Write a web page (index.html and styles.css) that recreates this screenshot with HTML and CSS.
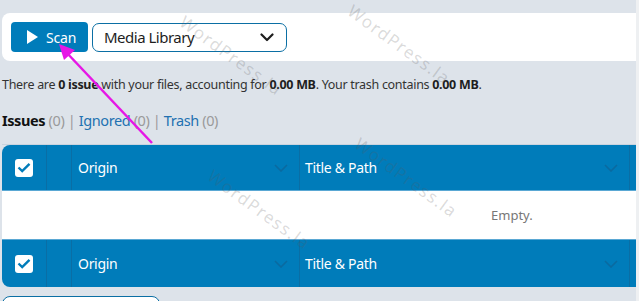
FILE: index.html
```html
<!DOCTYPE html>
<html lang="en">
<head>
  <meta charset="UTF-8" />
  <title>Media Cleaner</title>
  <link rel="stylesheet" href="styles.css">
</head>
<body>
  <div class="page">

    <div class="toolbar">
      <button class="scan-btn">
        <svg width="11" height="14" viewBox="0 0 11 14"><path d="M0 0 L11 7 L0 14 Z" fill="#fff"/></svg>
        <span>Scan</span>
      </button>
      <div class="source-select">
        <span>Media Library</span>
        <svg width="14" height="9" viewBox="0 0 14 9"><path d="M1.5 1.5 L7 7 L12.5 1.5" fill="none" stroke="#1e1e1e" stroke-width="2.2" stroke-linecap="round" stroke-linejoin="round"/></svg>
      </div>
    </div>

    <p class="summary">There are <b>0 issue</b> with your files, accounting for <b>0.00 MB</b>. Your trash contains <b>0.00 MB</b>.</p>

    <div class="tabs">
      <span class="tab-active">Issues</span> <span class="count">(0)</span>
      <span class="sep">|</span>
      <a href="#">Ignored</a> <span class="count">(0)</span>
      <span class="sep">|</span>
      <a href="#">Trash</a> <span class="count">(0)</span>
    </div>

    <div class="table">
      <div class="row head first">
        <div class="cell c-check"><span class="checkbox"><svg width="14" height="11" viewBox="0 0 14 11"><path d="M1.5 5.5 L5.2 9 L12.5 1.8" fill="none" stroke="#007cba" stroke-width="2.4"/></svg></span></div>
        <div class="cell c-thumb"></div>
        <div class="cell c-origin">Origin<svg class="chev" width="14" height="8" viewBox="0 0 14 8"><path d="M1 1 L7 7 L13 1" fill="none" stroke="#0a6aa0" stroke-width="1.6"/></svg></div>
        <div class="cell c-title">Title &amp; Path<svg class="chev" width="14" height="8" viewBox="0 0 14 8"><path d="M1 1 L7 7 L13 1" fill="none" stroke="#0a6aa0" stroke-width="1.6"/></svg></div>
        <div class="cell c-rest"></div>
      </div>
      <div class="row empty">Empty.</div>
      <div class="row head last">
        <div class="cell c-check"><span class="checkbox"><svg width="14" height="11" viewBox="0 0 14 11"><path d="M1.5 5.5 L5.2 9 L12.5 1.8" fill="none" stroke="#007cba" stroke-width="2.4"/></svg></span></div>
        <div class="cell c-thumb"></div>
        <div class="cell c-origin">Origin<svg class="chev" width="14" height="8" viewBox="0 0 14 8"><path d="M1 1 L7 7 L13 1" fill="none" stroke="#0a6aa0" stroke-width="1.6"/></svg></div>
        <div class="cell c-title">Title &amp; Path<svg class="chev" width="14" height="8" viewBox="0 0 14 8"><path d="M1 1 L7 7 L13 1" fill="none" stroke="#0a6aa0" stroke-width="1.6"/></svg></div>
        <div class="cell c-rest"></div>
      </div>
    </div>

    <div class="pager"></div>

    <span class="watermark wm1">WordPress.la</span>
    <span class="watermark wm2">WordPress.la</span>
    <span class="watermark wm3">WordPress.la</span>
    <span class="watermark wm4">WordPress.la</span>

    <svg class="arrow" width="160" height="150" viewBox="0 0 160 150">
      <line x1="152" y1="143" x2="66" y2="52" stroke="#e617e6" stroke-width="2.5"/>
      <polygon points="59,44 75,50 64,60" fill="#e617e6"/>
    </svg>
  </div>
</body>
</html>
```

FILE: styles.css
```css
html, body {
  margin: 0;
  overflow: hidden;
}

body {
  background: #eef0f2;
  font-family: 'Noto Sans', 'Open Sans', sans-serif;
  color: #333;
}

.page {
  position: relative;
  width: 634px;
  min-height: 330px;
  padding: 13px 0 0 2px;
  background: #dde3ea;
}

.toolbar {
  display: flex;
  align-items: center;
  gap: 4px;
  height: 48px;
  padding-left: 9px;
  background: #fff;
  border-radius: 8px 0 0 8px;
}

.scan-btn {
  display: flex;
  align-items: center;
  gap: 8px;
  width: 77px;
  height: 30px;
  padding: 0 0 0 16px;
  border: none;
  border-radius: 4px;
  background: #007cba;
  color: #fff;
  font-family: inherit;
  font-size: 14px;
  letter-spacing: -0.2px;
}

.source-select {
  display: flex;
  align-items: center;
  justify-content: space-between;
  box-sizing: border-box;
  width: 195px;
  height: 29px;
  padding: 0 12px 0 11px;
  border: 1.5px solid #0b6fa4;
  border-radius: 7px;
  font-size: 15px;
  letter-spacing: -0.5px;
  color: #1e1e1e;
}

.summary {
  margin: 15px 0 0 0;
  font-size: 12.5px;
  line-height: 18px;
  letter-spacing: -0.3px;
  color: #333;
}

.summary b {
  color: #1e1e1e;
}

.tabs {
  margin-top: 16px;
  font-size: 14.5px;
  line-height: 20px;
  letter-spacing: -0.4px;
  color: #999;
}

.tabs a {
  color: #2271b1;
  text-decoration: none;
}

.tab-active {
  font-weight: bold;
  color: #111;
}

.count, .sep {
  color: #9a9a9a;
}

.table {
  margin-top: 14px;
  border-top: 1px solid #c9d3de;
}

.row {
  display: flex;
}

.head {
  height: 45px;
  background: #007cba;
  color: #fff;
  font-size: 14px;
  letter-spacing: -0.3px;
}

.head.first {
  border-radius: 8px 0 0 0;
}

.head.last {
  border-radius: 0 0 0 8px;
  border-top: 1px solid #5aa8d4;
  height: 47px;
}

.cell {
  display: flex;
  align-items: center;
  border-right: 1px solid #0a6ea5;
}

.c-check {
  width: 44px;
  justify-content: center;
}

.c-thumb {
  width: 24px;
}

.c-origin {
  width: 228px;
  padding-left: 6px;
  box-sizing: border-box;
  justify-content: space-between;
  padding-right: 11px;
}

.c-title {
  width: 330px;
  padding-left: 5px;
  box-sizing: border-box;
  justify-content: space-between;
  padding-right: 11px;
}

.c-rest {
  flex: 1;
  border-right: none;
}

.checkbox {
  display: flex;
  align-items: center;
  justify-content: center;
  width: 18px;
  height: 18px;
  background: #fff;
  border-radius: 3px;
}

.empty {
  height: 48px;
  align-items: center;
  padding-left: 489px;
  background: #fff;
  border-top: 1px solid #5aa8d4;
  font-size: 13px;
  color: #777;
}

.pager {
  width: 156px;
  height: 20px;
  margin-top: 9px;
  background: #fff;
  border: 1.5px solid #0b6fa4;
  border-radius: 8px;
}

.watermark {
  position: absolute;
  font-size: 17px;
  letter-spacing: 1.5px;
  color: rgba(90, 90, 90, 0.22);
  transform: rotate(36deg);
  transform-origin: left center;
  white-space: nowrap;
}

.wm1 { left: 182px; top: 8px; }
.wm2 { left: 350px; top: -3px; }
.wm3 { left: 210px; top: 162px; }
.wm4 { left: 357px; top: 130px; }

.arrow {
  position: absolute;
  left: 0;
  top: 0;
}
```
